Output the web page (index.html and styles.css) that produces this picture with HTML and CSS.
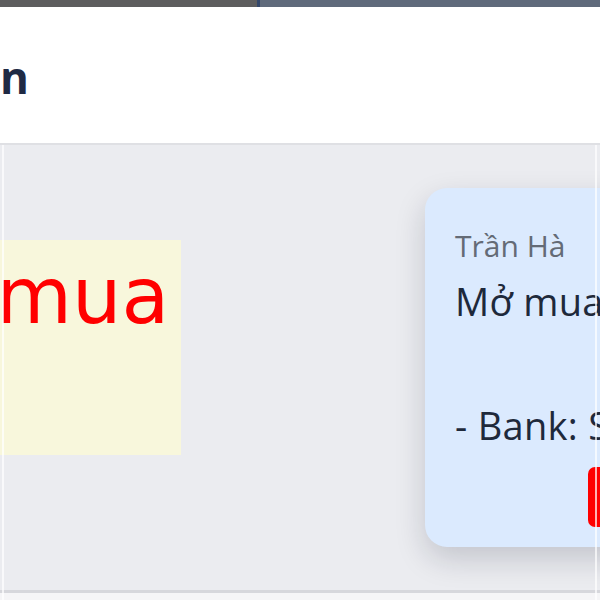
FILE: index.html
```html
<!DOCTYPE html>
<html lang="vi">
<head>
    <meta charset="UTF-8">
    <meta name="viewport" content="width=device-width, initial-scale=1.0">
    <title>Chat</title>
    <link rel="stylesheet" href="styles.css">
</head>
<body>
    <!-- Top tab strip -->
    <div class="topbar">
        <div class="tab-left"></div>
        <div class="tab-mark"></div>
        <div class="tab-right"></div>
    </div>

    <!-- Page header -->
    <div class="header">
        <h1 class="title">n</h1>
    </div>

    <div class="frame">
        <div class="main">
            <!-- Highlighted note -->
            <div class="note">
                <span class="note-text">mua</span>
            </div>

            <!-- Message card -->
            <div class="card">
                <div class="sender">Trần Hà</div>
                <div class="message">Mở mua hàng<br><br>- Bank: STK</div>
                <div class="actions">
                    <button class="btn-buy">Mua ngay</button>
                </div>
            </div>
        </div>
        <div class="footer"></div>
    </div>
</body>
</html>
```

FILE: styles.css
```css
body {
    margin: 0;
    padding: 0;
    width: 600px;
    height: 600px;
    overflow: hidden;
    font-family: "Open Sans", "Noto Sans", sans-serif;
    background-color: #f5f5f7;
}
.topbar {
    display: flex;
    height: 7px;
}
.tab-left {
    width: 257px;
    background-color: #5d5d5e;
}
.tab-mark {
    width: 3px;
    background-color: #34476a;
}
.tab-right {
    flex: 1;
    background-color: #5f6a7b;
}
.header {
    height: 136px;
    background: #fff;
    border-bottom: 2px solid #dfe0e4;
}
.title {
    margin: 0;
    padding: 44px 0 0 0;
    font-size: 44px;
    line-height: 52px;
    font-weight: bold;
    color: #1f2a44;
}
.frame {
    position: relative;
}
.frame::before,
.frame::after {
    content: "";
    position: absolute;
    top: 0;
    bottom: 0;
    width: 2px;
    background: rgba(255, 255, 255, 0.7);
}
.frame::before {
    left: 2px;
}
.frame::after {
    left: 595px;
}
.main {
    display: flex;
    align-items: flex-start;
    height: 445px;
    overflow: hidden;
    background-color: #ebecf0;
}
.note {
    flex: none;
    width: 181px;
    height: 215px;
    margin-top: 95px;
    padding-top: 11px;
    box-sizing: border-box;
    background-color: #f8f7dc;
    overflow: hidden;
}
.note-text {
    display: block;
    margin-left: -4px;
    font-family: "DejaVu Sans", sans-serif;
    font-size: 78px;
    line-height: 90px;
    color: #ff0000;
    white-space: nowrap;
}
.card {
    flex: none;
    width: 420px;
    height: 359px;
    margin: 43px 0 0 244px;
    padding: 40px 0 0 30px;
    box-sizing: border-box;
    background-color: #dbeafe;
    border-radius: 22px;
    box-shadow: 0 12px 30px rgba(15, 23, 42, 0.18);
}
.sender {
    font-size: 30px;
    line-height: 36px;
    color: #646b76;
}
.message {
    margin-top: 6px;
    font-size: 38px;
    line-height: 62px;
    letter-spacing: 0.3px;
    color: #1e293b;
    white-space: nowrap;
}
.actions {
    display: flex;
    margin-top: 11px;
    padding-left: 133px;
}
.btn-buy {
    height: 60px;
    padding: 0 24px;
    border: none;
    border-radius: 7px;
    background-color: #ff0000;
    color: #fff;
    font-size: 24px;
    font-family: inherit;
}
.footer {
    height: 7px;
    border-top: 3px solid #d6d7dc;
    background-color: #f5f5f7;
}
```
